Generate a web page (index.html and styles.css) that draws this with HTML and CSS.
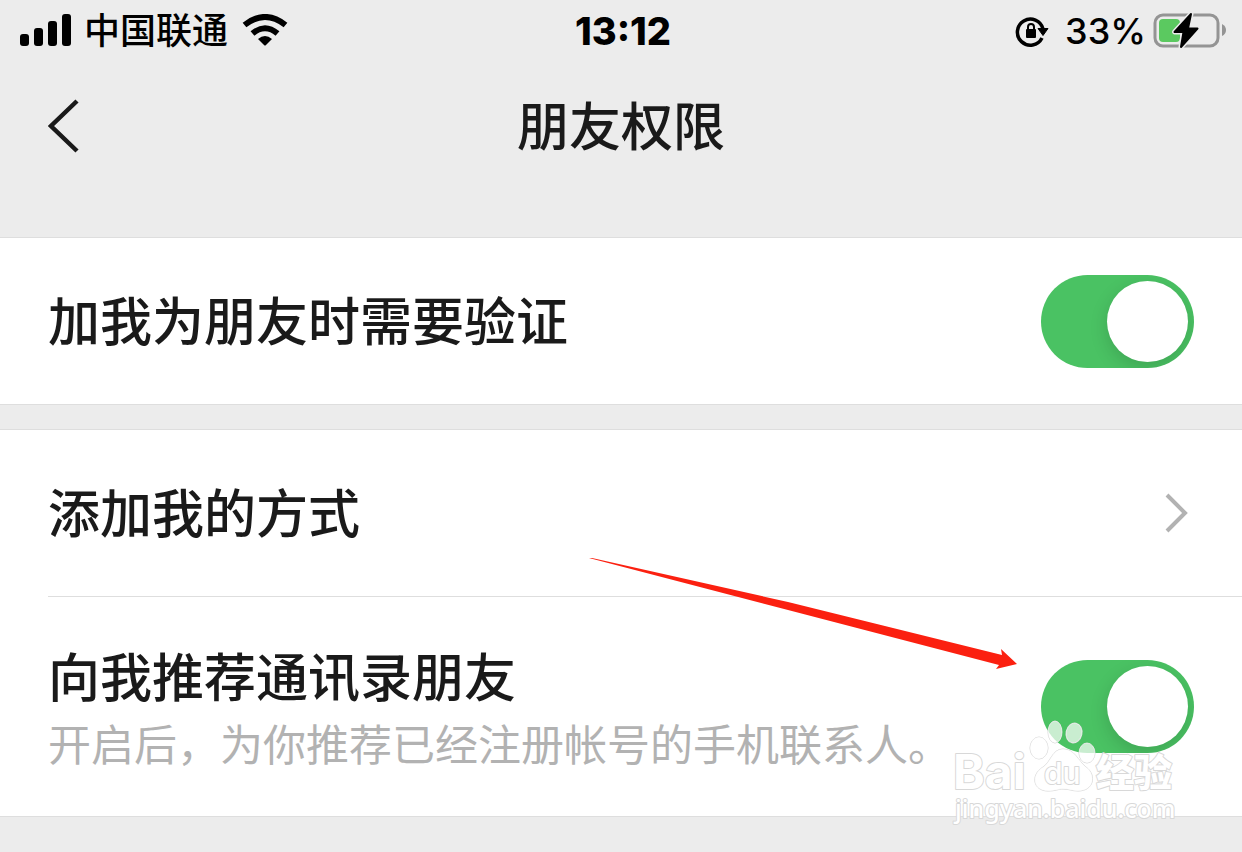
FILE: index.html
```html
<!DOCTYPE html>
<html lang="zh-CN">
<head>
  <meta charset="UTF-8" />
  <meta name="viewport" content="width=device-width, initial-scale=1.0"/>
  <title>朋友权限</title>
  <link rel="stylesheet" href="styles.css">
</head>
<body>

<div class="status-bar">
  <div class="status-left">
    <svg class="signal" width="52" height="34" viewBox="0 0 52 34">
      <rect x="0" y="20" width="9" height="12" rx="3"/>
      <rect x="14" y="14" width="9" height="18" rx="3"/>
      <rect x="28" y="7" width="9" height="25" rx="3"/>
      <rect x="42" y="0" width="9" height="32" rx="3"/>
    </svg>
    <span class="carrier">中国联通</span>
    <svg class="wifi" width="46" height="34" viewBox="0 0 46 34">
      <path d="M2.500 11 Q23 -5 43.500 11" fill="none" stroke="#000" stroke-width="6"/>
      <path d="M10.500 19.500 Q23 9 35.500 19.500" fill="none" stroke="#000" stroke-width="6"/>
      <path d="M16 25 Q23 19 30 25 L24 31 Q23 32 22 31 Z"/>
    </svg>
  </div>
  <div class="time">13:12</div>
  <div class="status-right">
    <svg class="rotation-lock" width="34" height="32" viewBox="0 0 34 32">
      <path d="M27 23 A13 13 0 1 1 28 14" fill="none" stroke="#000" stroke-width="3.500"/>
      <path d="M23 13.500 L33 13.500 L28 20.500 Z" stroke="#000" stroke-width="1" stroke-linejoin="round"/>
      <rect x="11" y="14" width="10" height="9" rx="1"/>
      <path d="M13 15 V12 A3 3 0 0 1 19 12 V15" fill="none" stroke="#000" stroke-width="2"/>
    </svg>
    <span class="percent">33%</span>
    <svg class="battery" width="74" height="42" viewBox="0 0 74 42">
      <rect x="3" y="5" width="63" height="31" rx="8" fill="none" stroke="#949494" stroke-width="3"/>
      <rect x="7" y="9" width="21" height="23" rx="4" fill="#5bc960"/>
      <path d="M70 14 Q74 16 74 20 Q74 24 70 26 Z" fill="#949494"/>
      <path d="M39 4 L22.500 22 H31.500 L29 37 L45.500 18.500 H36 Z" fill="#ececec" stroke="#ececec" stroke-width="5" stroke-linejoin="round"/>
      <path d="M39 4 L22.500 22 H31.500 L29 37 L45.500 18.500 H36 Z" stroke="#000" stroke-width="2" stroke-linejoin="round"/>
    </svg>
  </div>
</div>

<header class="nav">
  <button class="back" type="button" aria-label="返回">
    <svg width="32" height="54" viewBox="0 0 32 54">
      <path d="M29 2 L3 27 L29 52" fill="none" stroke="#1a1a1a" stroke-width="4.500"/>
    </svg>
  </button>
  <h1>朋友权限</h1>
</header>

<main>
  <section class="group">
    <div class="row">
      <label class="label" for="verify">加我为朋友时需要验证</label>
      <input class="switch" type="checkbox" id="verify" checked />
    </div>
  </section>

  <section class="group">
    <a class="row" href="#">
      <span class="label">添加我的方式</span>
      <svg class="chevron" width="24" height="40" viewBox="0 0 24 40">
        <path d="M2 2 L20 20 L2 38" fill="none" stroke="#b2b2b2" stroke-width="4"/>
      </svg>
    </a>
    <div class="row row-tall">
      <div class="row-text">
        <label class="label" for="recommend">向我推荐通讯录朋友</label>
        <p class="hint">开启后，为你推荐已经注册帐号的手机联系人。</p>
      </div>
      <input class="switch" type="checkbox" id="recommend" checked />
    </div>

    <svg class="arrow" width="430" height="116" viewBox="0 0 430 116">
      <path d="M1 1 L4 1 L200 45 L414 98 L413 92 L429 107 L408 112 L411 108 L200 53 Z" fill="#fb2010"/>
    </svg>

    <svg class="watermark" width="230" height="112" viewBox="0 0 230 112">
      <g class="wm-shape">
        <ellipse cx="87" cy="32" rx="9" ry="11"/>
        <ellipse cx="103" cy="16" rx="7" ry="11"/>
        <ellipse cx="122" cy="17" rx="8" ry="10" transform="rotate(12 122 17)"/>
        <ellipse cx="135" cy="37" rx="8" ry="10"/>
        <path d="M111 33 C100 33 99 46 91 51 C78 59 81 75 96 75 C104 75 106 73 111 73 C117 73 120 75 126 75 C142 75 145 59 134 51 C126 45 123 33 111 33 Z"/>
      </g>
      <text class="wm-logo" x="1" y="73">Bai</text>
      <text class="wm-du" x="92" y="68">du</text>
      <text class="wm-cn" x="144" y="70">经验</text>
      <text class="wm-url" x="3" y="102">jingyan.baidu.com</text>
    </svg>
  </section>
</main>

</body>
</html>
```
FILE: styles.css
```css
* {
  box-sizing: border-box;
}

body {
  margin: 0;
  background: #ececec;
  color: #1a1a1a;
  font-family: Inter, 'Noto Sans CJK SC', sans-serif;
}

svg {
  display: block;
  flex: none;
}

.status-bar {
  display: grid;
  grid-template-columns: 1fr auto 1fr;
  align-items: center;
  height: 62px;
  padding: 0 16px 0 20px;
  color: #000;
}

.status-left,
.status-right {
  display: flex;
  align-items: center;
}

.status-right {
  justify-content: flex-end;
}

.carrier {
  margin: 0 14px 0 12px;
  font-size: 36px;
  font-weight: 500;
  line-height: 52px;
}

.time {
  font-size: 38px;
  font-weight: 800;
}

.percent {
  margin: 0 6px 0 16px;
  font-size: 36px;
  font-weight: 500;
}

.nav {
  display: grid;
  grid-template-columns: 1fr auto 1fr;
  align-items: center;
  height: 175px;
  padding: 0 48px 48px;
}

.back {
  justify-self: start;
  padding: 0;
  border: none;
  background: none;
  cursor: pointer;
}

h1 {
  margin: 0;
  padding-top: 4px;
  font-size: 52px;
  font-weight: 500;
  line-height: 72px;
}

.group {
  position: relative;
  margin-bottom: 24px;
  background: #fff;
  border-top: 1px solid #dedede;
  border-bottom: 1px solid #dedede;
}

.row {
  display: flex;
  align-items: center;
  justify-content: space-between;
  min-height: 166px;
  padding: 0 48px;
  color: inherit;
  text-decoration: none;
}

.row-tall {
  min-height: 220px;
  margin-left: 48px;
  padding-left: 0;
  border-top: 1px solid #dedede;
}

.label {
  display: block;
  padding-top: 4px;
  font-size: 52px;
  font-weight: 500;
  line-height: 72px;
}

.hint {
  margin: 0;
  color: #b2b2b2;
  font-size: 43px;
  line-height: 60px;
}

.chevron {
  margin-right: 5px;
}

.switch {
  flex: none;
  appearance: none;
  width: 153px;
  height: 93px;
  margin: 0;
  padding: 6px;
  border-radius: 47px;
  background: #e5e5e5;
  overflow: hidden;
  cursor: pointer;
}

.switch::before {
  content: '';
  display: block;
  width: 81px;
  height: 81px;
  border-radius: 50%;
  background: #fff;
  box-shadow: 0 6px 18px rgba(0, 0, 0, 0.15);
}

.switch:checked {
  background: #4ac263;
}

.switch:checked::before {
  margin-left: auto;
}

.arrow {
  position: absolute;
  top: 127px;
  right: 224px;
  pointer-events: none;
}

.watermark {
  position: absolute;
  right: 60px;
  bottom: -12px;
  fill: #fff;
  stroke: #d8d8d8;
  stroke-width: 2px;
  stroke-linejoin: round;
  paint-order: stroke;
  pointer-events: none;
}

.wm-shape {
  fill: rgba(255, 255, 255, 0.7);
  stroke-width: 1px;
}

.wm-logo {
  font-family: Inter, sans-serif;
  font-size: 48px;
  font-weight: 700;
}

.wm-du {
  font-family: Inter, sans-serif;
  font-size: 30px;
  font-weight: 500;
}

.wm-cn {
  font-family: 'Noto Sans CJK SC', sans-serif;
  font-size: 38px;
  font-weight: 900;
}

.wm-url {
  font-family: 'Noto Sans', sans-serif;
  font-size: 25px;
  font-weight: 500;
}
```
